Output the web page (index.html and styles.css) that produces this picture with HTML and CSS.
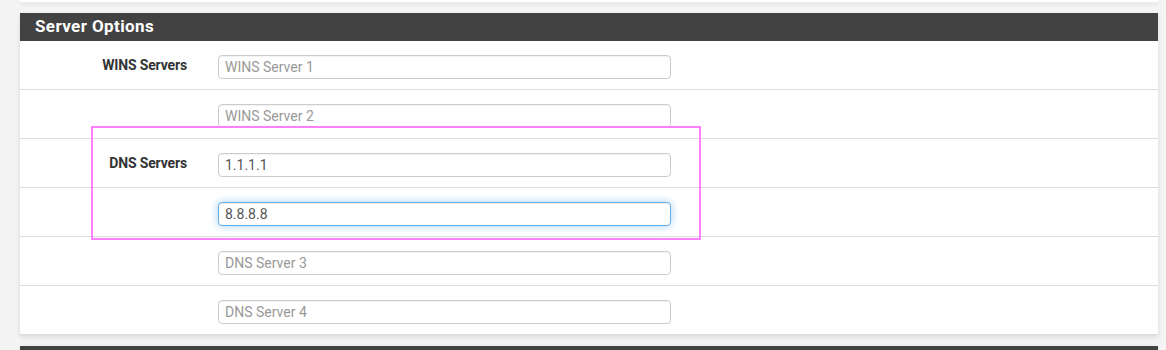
FILE: index.html
```html
<html lang="en"><head>
<meta charset="UTF-8">
<meta name="viewport" content="width=device-width, initial-scale=1.0">
<title>Server Options</title>
<link rel="stylesheet" href="styles.css">
</head>
<body>
<div class="panel prev"></div>

<div class="panel">
<div class="panel-heading">Server Options</div>
<div class="panel-body">
	<div class="row">
		<label class="lbl">WINS Servers</label>
		<input type="text" class="ctl" placeholder="WINS Server 1">
	</div>
	<div class="row">
		<label class="lbl"></label>
		<input type="text" class="ctl" placeholder="WINS Server 2">
	</div>
	<div class="row">
		<label class="lbl">DNS Servers</label>
		<input type="text" class="ctl" value="1.1.1.1" placeholder="DNS Server 1">
	</div>
	<div class="row">
		<label class="lbl"></label>
		<input type="text" class="ctl focus" value="8.8.8.8" placeholder="DNS Server 2">
	</div>
	<div class="row">
		<label class="lbl"></label>
		<input type="text" class="ctl" placeholder="DNS Server 3">
	</div>
	<div class="row">
		<label class="lbl"></label>
		<input type="text" class="ctl" placeholder="DNS Server 4">
	</div>
	<div class="mark"></div>
</div>
</div>

<div class="panel next"><div class="panel-heading"></div></div>
</body></html>
```

FILE: styles.css
```css
body {
	margin: 0;
	padding: 0 8px 0 20px;
	background: #f4f4f4;
	font-family: Roboto, "Liberation Sans", sans-serif;
	color: #333;
	overflow: hidden;
}

.panel {
	background: #fff;
	box-shadow: 0 2px 5px rgba(0,0,0,0.12);
	margin-bottom: 11px;
}

.panel.prev {
	height: 2px;
	margin-bottom: 11px;
}

.panel-heading {
	background: #424242;
	color: #fff;
	font-size: 17px;
	font-weight: bold;
	letter-spacing: 0.4px;
	height: 28px;
	line-height: 27px;
	padding-left: 15px;
}

.panel-body {
	position: relative;
}

.row {
	display: flex;
	align-items: flex-start;
	padding: 14px 0 10px;
	border-bottom: 1px solid #ddd;
}

.row:last-of-type {
	border-bottom: none;
}

.lbl {
	width: 167px;
	text-align: right;
	font-size: 14px;
	font-weight: bold;
	letter-spacing: -0.15px;
	padding-top: 2px;
	margin-right: 31px;
	line-height: 16px;
}

.ctl {
	width: 453px;
	height: 24px;
	box-sizing: border-box;
	border: 1px solid #ccc;
	border-radius: 4px;
	padding: 0 6px;
	font-family: Roboto, "Liberation Sans", sans-serif;
	font-size: 14px;
	color: #555;
	box-shadow: inset 0 1px 1px rgba(0,0,0,0.05);
	outline: none;
}

.ctl::placeholder {
	color: #999;
}

.ctl.focus {
	border-color: #66afe9;
	box-shadow: inset 0 1px 1px rgba(0,0,0,0.075), 0 0 8px rgba(102,175,233,0.6);
}

.mark {
	position: absolute;
	left: 71px;
	top: 85px;
	width: 606px;
	height: 110px;
	border: 2px solid #ff80ff;
	pointer-events: none;
}
```
